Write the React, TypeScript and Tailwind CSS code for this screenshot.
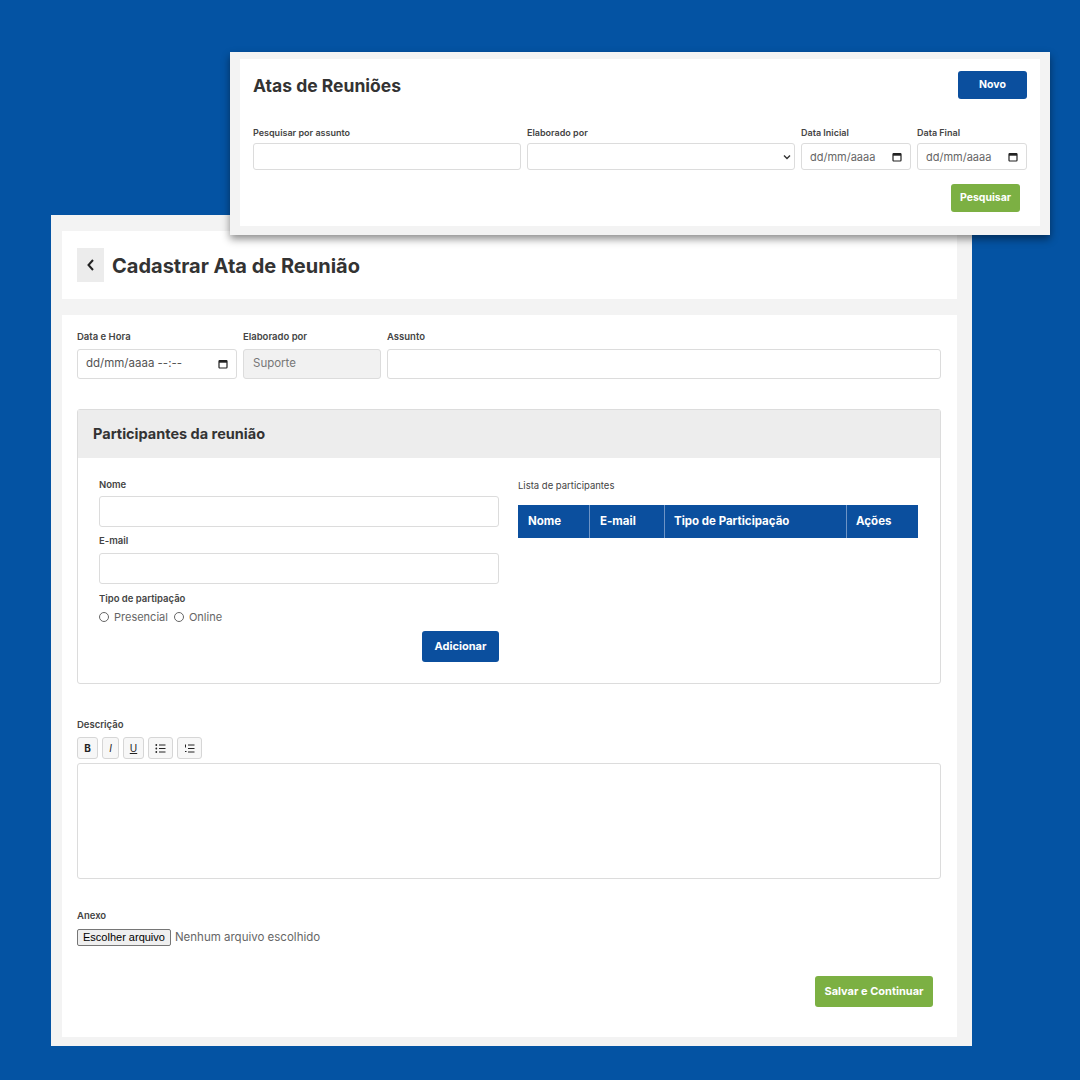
import React from 'react';

const font = { fontFamily: 'Inter, "Open Sans", Arial, sans-serif' };

const CalendarIcon = () => (
  <svg width="10" height="10" viewBox="0 0 10 10" className="shrink-0">
    <rect x="1" y="1.5" width="8" height="7.5" rx="0.8" fill="none" stroke="#222" strokeWidth="1.2" />
    <rect x="1" y="1.5" width="8" height="2.2" fill="#222" />
  </svg>
);

const ChevronDown = () => (
  <svg width="8" height="6" viewBox="0 0 8 6" className="shrink-0">
    <path d="M1 1.5 L4 4.5 L7 1.5" fill="none" stroke="#333" strokeWidth="1.4" />
  </svg>
);

const Label = ({ children, className = '' }: { children: React.ReactNode; className?: string }) => (
  <div className={`text-[9.5px] font-semibold text-[#444] leading-none ${className}`}>{children}</div>
);

const DateBox = ({ text }: { text: string }) => (
  <div className="h-[27px] border border-[#dcdcdc] rounded-[3px] bg-white flex items-center justify-between px-[8px] text-[11px] text-[#666]">
    <span>{text}</span>
    <CalendarIcon />
  </div>
);

const TopWindow = () => (
  <div className="absolute left-[230px] top-[52px] w-[820px] h-[183px] bg-[#f3f3f3] px-[10px] pt-[7px] pb-[9px] shadow-[0_4px_8px_rgba(0,0,0,0.45)]">
    <div className="h-full bg-white px-[13px] pt-[12px]">
      <div className="flex items-center justify-between">
        <h1 className="text-[17.5px] font-bold text-[#333] mt-[2px]">Atas de Reuniões</h1>
        <button className="w-[69px] h-[28px] rounded-[3px] bg-[#0b4f9e] text-white text-[10.5px] font-bold">Novo</button>
      </div>
      <div className="grid grid-cols-[268px_268px_110px_110px] gap-x-[6px] mt-[29px]">
        {['Pesquisar por assunto', 'Elaborado por', 'Data Inicial', 'Data Final'].map((l) => (
          <Label key={l} className="mb-[6px] font-medium text-[9px]">{l}</Label>
        ))}
        <div className="h-[27px] border border-[#dcdcdc] rounded-[3px] bg-white" />
        <div className="h-[27px] border border-[#dcdcdc] rounded-[3px] bg-white flex items-center justify-end pr-[3px]">
          <ChevronDown />
        </div>
        <DateBox text="dd/mm/aaaa" />
        <DateBox text="dd/mm/aaaa" />
      </div>
      <div className="flex justify-end pr-[7px] mt-[14px]">
        <button className="w-[69px] h-[28px] rounded-[3px] bg-[#7cb043] text-white text-[10.5px] font-bold">Pesquisar</button>
      </div>
    </div>
  </div>
);

const ToolBtn = ({ children, w }: { children: React.ReactNode; w: string }) => (
  <div className={`${w} h-[22px] border border-[#d6d6d6] rounded-[3px] bg-[#f7f7f7] flex items-center justify-center text-[10px] text-[#222]`}>
    {children}
  </div>
);

const ListIcon = ({ ordered }: { ordered?: boolean }) => (
  <svg width="11" height="9" viewBox="0 0 11 9">
    {ordered ? (
      <path d="M1.5 0.5 V3.5 M1 7.5 H2.5" stroke="#222" strokeWidth="1" />
    ) : (
      <>
        <circle cx="1.3" cy="1" r="0.9" fill="#222" />
        <circle cx="1.3" cy="4.5" r="0.9" fill="#222" />
        <circle cx="1.3" cy="8" r="0.9" fill="#222" />
      </>
    )}
    <path d="M4 1 H10.5 M4 4.5 H10.5 M4 8 H10.5" stroke="#222" strokeWidth="1" />
  </svg>
);

const Radio = ({ label }: { label: string }) => (
  <label className="flex items-center gap-[5px]">
    <span className="w-[10px] h-[10px] rounded-full border border-[#666] bg-white" />
    <span>{label}</span>
  </label>
);

const BackWindow = () => (
  <div className="absolute left-[51px] top-[215px] w-[921px] h-[831px] bg-[#f3f3f3] pl-[11px] pr-[15px] pt-[16px] pb-[9px] flex flex-col gap-[16px]">
    <div className="h-[68px] bg-white flex items-center px-[15px] gap-[8px] shrink-0">
      <div className="w-[27px] h-[34px] bg-[#ececec] flex items-center justify-center">
        <svg width="10" height="14" viewBox="0 0 10 14">
          <path d="M7 2 L2.5 7 L7 12" fill="none" stroke="#222" strokeWidth="2" />
        </svg>
      </div>
      <h2 className="text-[20px] font-bold text-[#333] mt-[1px]">Cadastrar Ata de Reunião</h2>
    </div>

    <div className="flex-1 bg-white pl-[15px] pr-[16px] pt-[17px] flex flex-col">
      <div className="grid grid-cols-[160px_138px_1fr] gap-x-[6px]">
        <Label className="mb-[7px]">Data e Hora</Label>
        <Label className="mb-[7px]">Elaborado por</Label>
        <Label className="mb-[7px]">Assunto</Label>
        <div className="h-[30px] border border-[#dcdcdc] rounded-[3px] bg-white flex items-center justify-between px-[8px] text-[11.5px] text-[#555]">
          <span>dd/mm/aaaa --:--</span>
          <CalendarIcon />
        </div>
        <div className="h-[30px] border border-[#dcdcdc] rounded-[3px] bg-[#f1f1f1] flex items-center px-[9px] text-[11.5px] text-[#777]">
          Suporte
        </div>
        <div className="h-[30px] border border-[#dcdcdc] rounded-[3px] bg-white" />
      </div>

      <div className="mt-[30px] border border-[#dcdcdc] rounded-[3px]">
        <div className="h-[48px] bg-[#ededed] flex items-center px-[15px]">
          <h3 className="text-[14.5px] font-bold text-[#333]">Participantes da reunião</h3>
        </div>
        <div className="px-[21px] pt-[22px] pb-[21px] grid grid-cols-[400px_400px] gap-x-[19px]">
          <div className="flex flex-col">
            <Label className="mb-[7px]">Nome</Label>
            <div className="h-[31px] border border-[#dcdcdc] rounded-[3px]" />
            <Label className="mt-[9px] mb-[7px]">E-mail</Label>
            <div className="h-[31px] border border-[#dcdcdc] rounded-[3px]" />
            <Label className="mt-[10px]">Tipo de partipação</Label>
            <div className="flex items-center gap-[6px] mt-[6px] text-[11px] text-[#666]">
              <Radio label="Presencial" />
              <Radio label="Online" />
            </div>
            <div className="flex justify-end mt-[5px]">
              <button className="w-[77px] h-[31px] rounded-[3px] bg-[#0b4f9e] text-white text-[11px] font-bold">Adicionar</button>
            </div>
          </div>
          <div className="flex flex-col">
            <div className="text-[9.5px] text-[#444] leading-none mb-[15px] mt-[1px]">Lista de participantes</div>
            <div className="flex h-[33px] bg-[#0b4f9e] text-white text-[11.5px] font-bold">
              <div className="w-[72px] flex items-center px-[10px] border-r border-[#6d94c6]">Nome</div>
              <div className="w-[75px] flex items-center px-[10px] border-r border-[#6d94c6]">E-mail</div>
              <div className="w-[182px] flex items-center px-[9px] border-r border-[#6d94c6]">Tipo de Participação</div>
              <div className="flex-1 flex items-center px-[9px]">Ações</div>
            </div>
          </div>
        </div>
      </div>

      <Label className="mt-[36px] mb-[8px]">Descrição</Label>
      <div className="flex gap-[4px]">
        <ToolBtn w="w-[21px]"><span className="font-bold">B</span></ToolBtn>
        <ToolBtn w="w-[17px]"><span className="italic">I</span></ToolBtn>
        <ToolBtn w="w-[21px]"><span className="underline">U</span></ToolBtn>
        <ToolBtn w="w-[25px]"><ListIcon /></ToolBtn>
        <ToolBtn w="w-[25px]"><ListIcon ordered /></ToolBtn>
      </div>
      <div className="mt-[4px] h-[116px] border border-[#dcdcdc] rounded-[3px]" />

      <Label className="mt-[32px] mb-[8px]">Anexo</Label>
      <div className="flex items-center gap-[4px]">
        <div
          className="h-[17px] px-[5px] border border-[#767676] rounded-[2px] bg-[#efefef] text-[11px] text-black flex items-center"
          style={{ fontFamily: 'Arial, "Liberation Sans", sans-serif' }}
        >
          Escolher arquivo
        </div>
        <span className="text-[11.5px] text-[#666]">Nenhum arquivo escolhido</span>
      </div>

      <div className="flex justify-end pr-[8px] mt-[30px]">
        <button className="w-[118px] h-[31px] rounded-[3px] bg-[#7cb043] text-white text-[11px] font-bold">Salvar e Continuar</button>
      </div>
    </div>
  </div>
);

export default function App() {
  return (
    <div className="relative w-[1080px] h-[1080px] bg-[#0453a3] overflow-hidden" style={font}>
      <BackWindow />
      <TopWindow />
    </div>
  );
}
